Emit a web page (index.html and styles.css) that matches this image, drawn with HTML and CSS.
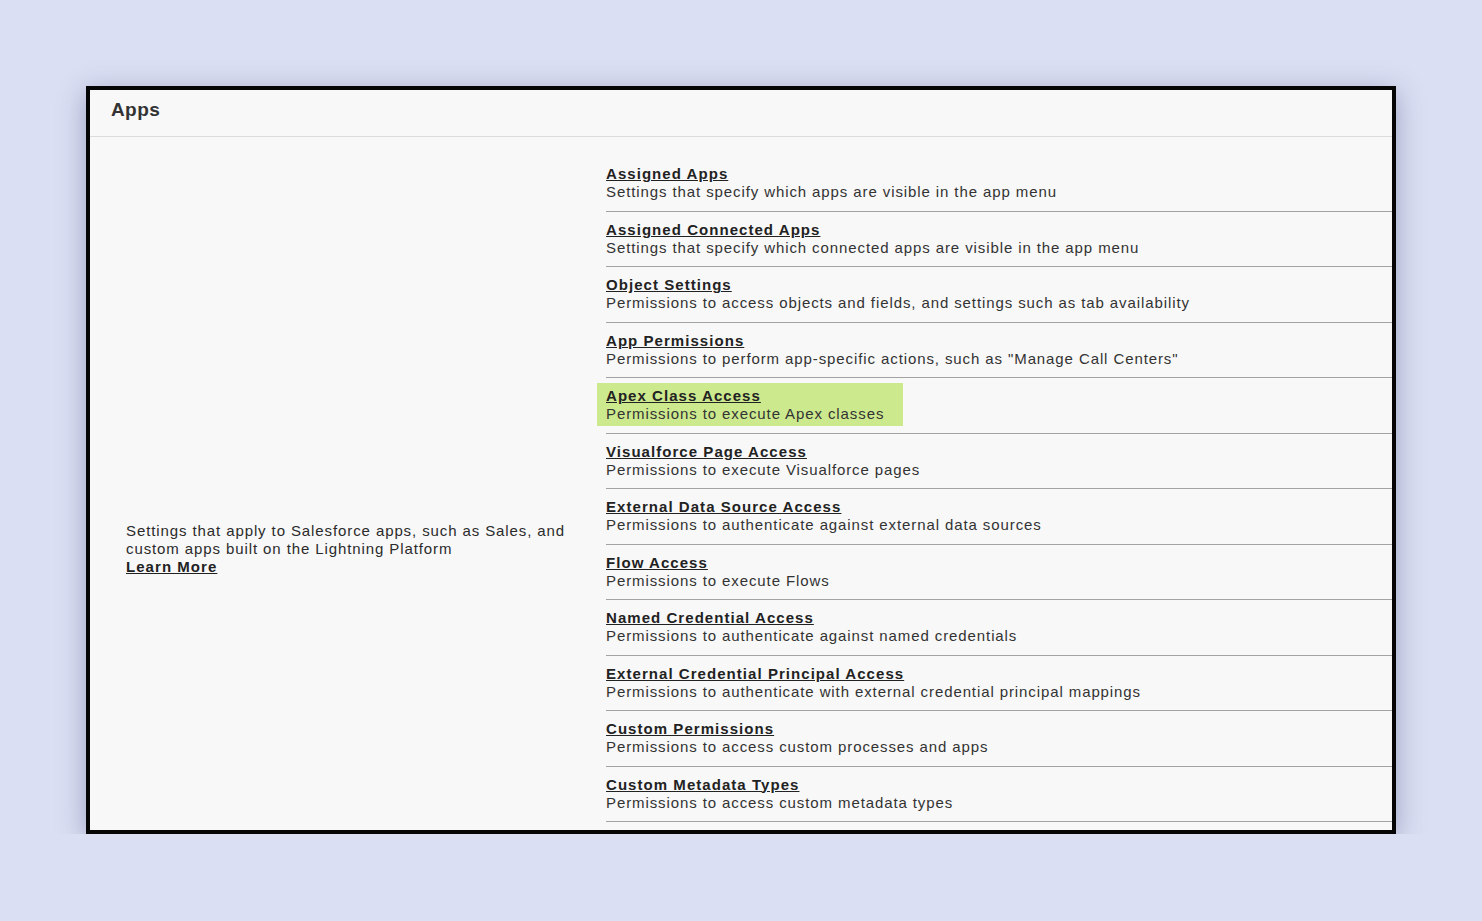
FILE: index.html
```html
<!DOCTYPE html>
<html>
<head>
<meta charset="utf-8">
<link rel="stylesheet" href="styles.css">
</head>
<body>
<div class="panel">
  <div class="header">Apps</div>
  <div class="content">
    <div class="intro">
      <p>Settings that apply to Salesforce apps, such as Sales, and custom apps built on the Lightning Platform</p>
      <a class="link" href="#">Learn More</a>
    </div>
    <ul class="list">
      <li class="row"><div class="item"><a class="title" href="#">Assigned Apps</a><span class="desc">Settings that specify which apps are visible in the app menu</span></div></li>
      <li class="row"><div class="item"><a class="title" href="#">Assigned Connected Apps</a><span class="desc">Settings that specify which connected apps are visible in the app menu</span></div></li>
      <li class="row"><div class="item"><a class="title" href="#">Object Settings</a><span class="desc">Permissions to access objects and fields, and settings such as tab availability</span></div></li>
      <li class="row"><div class="item"><a class="title" href="#">App Permissions</a><span class="desc">Permissions to perform app-specific actions, such as "Manage Call Centers"</span></div></li>
      <li class="row"><div class="item highlight"><a class="title" href="#">Apex Class Access</a><span class="desc">Permissions to execute Apex classes</span></div></li>
      <li class="row"><div class="item"><a class="title" href="#">Visualforce Page Access</a><span class="desc">Permissions to execute Visualforce pages</span></div></li>
      <li class="row"><div class="item"><a class="title" href="#">External Data Source Access</a><span class="desc">Permissions to authenticate against external data sources</span></div></li>
      <li class="row"><div class="item"><a class="title" href="#">Flow Access</a><span class="desc">Permissions to execute Flows</span></div></li>
      <li class="row"><div class="item"><a class="title" href="#">Named Credential Access</a><span class="desc">Permissions to authenticate against named credentials</span></div></li>
      <li class="row"><div class="item"><a class="title" href="#">External Credential Principal Access</a><span class="desc">Permissions to authenticate with external credential principal mappings</span></div></li>
      <li class="row"><div class="item"><a class="title" href="#">Custom Permissions</a><span class="desc">Permissions to access custom processes and apps</span></div></li>
      <li class="row"><div class="item"><a class="title" href="#">Custom Metadata Types</a><span class="desc">Permissions to access custom metadata types</span></div></li>
    </ul>
  </div>
</div>
</body>
</html>
```
FILE: styles.css
```css
html, body {
  margin: 0;
  padding: 0;
  background: #dbdff3;
}
body {
  padding: 86px 86px 0 86px;
  font-family: "Liberation Sans", Arial, sans-serif;
  color: #2b2b2b;
}
.panel {
  width: 1302px;
  height: 740px;
  border: 4px solid #050505;
  background: #f8f8f8;
  box-shadow: 0 6px 26px rgba(60, 70, 120, 0.4);
  display: flex;
  flex-direction: column;
}
.header {
  height: 46px;
  border-bottom: 1px solid #dcdcdc;
  padding-left: 21px;
  font-size: 19px;
  font-weight: bold;
  color: #333;
  line-height: 40px;
  letter-spacing: 0.4px;
}
.content {
  flex: 1;
  display: flex;
  min-height: 0;
}
.intro {
  width: 450px;
  padding: 385px 30px 0 36px;
  display: flex;
  flex-direction: column;
  font-size: 15px;
  line-height: 18px;
  letter-spacing: 0.9px;
  color: #2b2b2b;
}
.intro p {
  margin: 0;
}
.link {
  color: #222;
  font-weight: bold;
  letter-spacing: 1.05px;
  text-decoration: underline;
  align-self: flex-start;
}
.list {
  list-style: none;
  margin: 0;
  padding: 19px 0 0 0;
  flex: 1;
}
.row {
  height: 55.5px;
  box-sizing: border-box;
  border-bottom: 1px solid #a3a3a3;
  padding-top: 9px;
}
.item {
  display: inline-flex;
  flex-direction: column;
  font-size: 15px;
  line-height: 18px;
  letter-spacing: 0.9px;
}
.item.highlight {
  background: #cde98e;
  margin: -4px 0 0 -9px;
  padding: 4px 19px 3px 9px;
}
.title {
  color: #222;
  font-weight: bold;
  letter-spacing: 1.05px;
  text-decoration: underline;
  align-self: flex-start;
}
.desc {
  color: #333;
}
```
